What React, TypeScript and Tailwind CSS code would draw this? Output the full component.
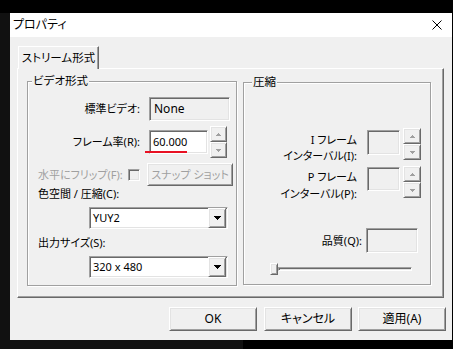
import React from "react";

const sunken =
  "border border-t-[#a0a0a0] border-l-[#a0a0a0] border-r-white border-b-white shadow-[inset_1px_1px_0_#696969,inset_-1px_-1px_0_#e3e3e3]";
const raised =
  "border border-t-white border-l-white border-r-[#696969] border-b-[#696969] shadow-[inset_1px_1px_0_#e3e3e3,inset_-1px_-1px_0_#a0a0a0]";

function UpArrow({ color }: { color: string }) {
  return (
    <svg width="5" height="3" viewBox="0 0 5 3" shapeRendering="crispEdges">
      <path d="M2 0h1v1h1v1h1v1H0V2h1V1h1z" fill={color} />
    </svg>
  );
}
function DownArrow({ color }: { color: string }) {
  return (
    <svg width="5" height="3" viewBox="0 0 5 3" shapeRendering="crispEdges">
      <path d="M0 0h5v1h-1v1h-1v1h-1v-1h-1v-1h-1z" fill={color} />
    </svg>
  );
}
function ComboArrow() {
  return (
    <svg width="7" height="4" viewBox="0 0 7 4" shapeRendering="crispEdges">
      <path d="M0 0h7v1h-1v1h-1v1h-1v1h-1v-1h-1v-1h-1v-1h-1z" fill="#000" />
    </svg>
  );
}

function Spinner({ w = 17 }: { w?: number }) {
  return (
    <div className={`flex flex-col ${w === 18 ? "w-[18px]" : "w-[17px]"}`}>
      <div className={`${raised} h-[16px] flex items-center justify-center bg-[#f0f0f0]`}>
        <UpArrow color="#a0a0a0" />
      </div>
      <div className={`${raised} h-[16px] flex items-center justify-center bg-[#f0f0f0]`}>
        <DownArrow color="#a0a0a0" />
      </div>
    </div>
  );
}

function Combo({ value }: { value: string }) {
  return (
    <div className={`${sunken} ml-[51px] w-[139px] h-[22px] bg-white flex items-center`}>
      <span className="pl-[3px] flex-1 leading-[16px] whitespace-nowrap">{value}</span>
      <div className={`${raised} w-[18px] h-[20px] mr-[1px] bg-[#f0f0f0] flex items-center justify-center`}>
        <ComboArrow />
      </div>
    </div>
  );
}

function Button({ label, className = "" }: { label: string; className?: string }) {
  return (
    <div className={`${raised} w-[88px] h-[24px] bg-[#f0f0f0] flex items-center justify-center leading-[16px] whitespace-nowrap ${className}`}>
      {label}
    </div>
  );
}

export default function App() {
  return (
    <div className="w-[453px] h-[349px] bg-black flex flex-col overflow-hidden font-['Noto_Sans','Noto_Sans_CJK_JP',sans-serif] text-[11px] text-black [font-feature-settings:'palt']">
      <div className="h-[13px] shrink-0" />
      <div className="flex h-[327px] shrink-0">
        <div className="w-[10px] bg-[#111]" />
        <div className="w-[442px] bg-[#f0f0f0] flex flex-col">
          {/* Title bar */}
          <div className="h-[24px] bg-white flex items-center pl-[3px]">
            <span className="leading-[16px] text-[12px]">プロパティ</span>
            <svg className="ml-auto mr-[10px]" width="10" height="10" viewBox="0 0 10 10">
              <path d="M0.5 0.5L9.5 9.5M9.5 0.5L0.5 9.5" stroke="#000" strokeWidth="1" />
            </svg>
          </div>
          {/* Body */}
          <div className="flex flex-col pl-[7px] pt-[9px]">
            <div className="flex h-[22px]">
              <div className="ml-[1px] w-[81px] h-[23px] relative z-10 bg-[#f0f0f0] border-t border-l border-r border-t-white border-l-white border-r-[#696969] shadow-[inset_-1px_0_0_#a0a0a0] flex items-center justify-center leading-[16px] whitespace-nowrap text-[11.5px]">
                ストリーム形式
              </div>
            </div>
            <div className="w-[427px] h-[230px] border border-t-white border-l-white border-r-[#696969] border-b-[#696969] shadow-[inset_-1px_-1px_0_#a0a0a0] flex pl-[9px] pt-[12px]">
              {/* Group 1 */}
              <div className="relative w-[210px] h-[205px] border border-[#a0a0a0] shadow-[inset_1px_1px_0_#fff,1px_1px_0_#fff] flex flex-col pl-[10px]">
                <span className="absolute left-[4px] top-[-9px] px-[1px] bg-[#f0f0f0] leading-[16px] whitespace-nowrap text-[11.5px]">ビデオ形式</span>
                {/* row 1 */}
                <div className="mt-[15px] flex items-center h-[24px]">
                  <span className="w-[102px] text-right leading-[16px] whitespace-nowrap">標準ビデオ:</span>
                  <div className={`${sunken} ml-[9px] w-[81px] h-[24px] bg-[#f0f0f0] flex items-center pl-[4px] leading-[16px] text-[12px]`}>None</div>
                </div>
                {/* row 2 */}
                <div className="mt-[5px] flex items-center h-[32px]">
                  <span className="w-[102px] text-right leading-[16px] whitespace-nowrap">フレーム率(R):</span>
                  <div className="relative ml-[9px]">
                    <div className={`${sunken} w-[59px] h-[24px] bg-white flex items-center pl-[3px] leading-[16px]`}>60.000</div>
                    <div className="absolute left-[-4px] top-[21px] w-[42px] h-[2px] bg-[#e81123]" />
                  </div>
                  <div className="ml-[2px]">
                    <Spinner />
                  </div>
                </div>
                {/* row 3 */}
                <div className="mt-[5px] flex items-center h-[23px]">
                  <span className="w-[90px] leading-[16px] text-[#a0a0a0] whitespace-nowrap">水平にフリップ(F):</span>
                  <div className={`${sunken} w-[12px] h-[12px] bg-[#f0f0f0]`} />
                  <div className={`${raised} ml-[7px] w-[86px] h-[23px] bg-[#f0f0f0] flex items-center justify-center leading-[16px] text-[#a0a0a0] whitespace-nowrap`}>
                    スナップ ショット
                  </div>
                </div>
                <div className="mt-[1px] h-[14px] flex items-center leading-[16px] whitespace-nowrap">色空間 / 圧縮(C):</div>
                <div className="mt-[6px]">
                  <Combo value="YUY2" />
                </div>
                <div className="mt-[7px] h-[14px] flex items-center leading-[16px] whitespace-nowrap">出力サイズ(S):</div>
                <div className="mt-[6px]">
                  <Combo value="320 x 480" />
                </div>
              </div>
              {/* Group 2 */}
              <div className="relative ml-[6px] mt-[1px] w-[188px] h-[203px] border border-[#a0a0a0] shadow-[inset_1px_1px_0_#fff,1px_1px_0_#fff] flex flex-col">
                <span className="absolute left-[8px] top-[-9px] px-[1px] bg-[#f0f0f0] leading-[16px] text-[11.5px]">圧縮</span>
                {/* I frame */}
                <div className="mt-[45px] flex items-start h-[32px]">
                  <div className="mt-[4px] w-[113px] text-right leading-[16px] whitespace-nowrap">
                    <div>I フレーム</div>
                    <div>インターバル(I):</div>
                  </div>
                  <div className={`${sunken} mt-[2px] ml-[10px] w-[33px] h-[25px] bg-[#f0f0f0]`} />
                  <div className="ml-[3px]">
                    <Spinner w={18} />
                  </div>
                </div>
                {/* P frame */}
                <div className="mt-[6px] flex items-start h-[32px]">
                  <div className="mt-[2px] w-[113px] text-right leading-[17px] whitespace-nowrap">
                    <div>P フレーム</div>
                    <div>インターバル(P):</div>
                  </div>
                  <div className={`${sunken} mt-[1px] ml-[10px] w-[33px] h-[24px] bg-[#f0f0f0]`} />
                  <div className="ml-[3px]">
                    <Spinner w={18} />
                  </div>
                </div>
                {/* Quality */}
                <div className="mt-[30px] flex items-center h-[25px]">
                  <span className="w-[118px] text-right leading-[16px] whitespace-nowrap">品質(Q):</span>
                  <div className={`${sunken} ml-[4px] w-[52px] h-[25px] bg-[#f0f0f0]`} />
                </div>
                {/* Slider */}
                <div className="mt-[10px] pl-[26px] flex items-start h-[12px]">
                  <div className={`${raised} w-[8px] h-[12px] bg-[#f0f0f0] relative z-10`} />
                  <div className="mt-[4px] w-[134px] h-[4px] border border-t-[#a0a0a0] border-l-[#a0a0a0] border-r-white border-b-white shadow-[inset_1px_1px_0_#696969] bg-[#e3e3e3]" />
                </div>
              </div>
            </div>
            {/* Buttons */}
            <div className="mt-[9px] flex justify-end pr-[6px] text-[12px]">
              <Button label="OK" />
              <Button label="キャンセル" className="ml-[7px]" />
              <Button label="適用(A)" className="ml-[6px]" />
            </div>
          </div>
        </div>
        <div className="flex-1 bg-black" />
      </div>
      <div className="flex h-[9px] shrink-0">
        <div className="w-[243px] bg-[#111]" />
        <div className="flex-1 bg-black" />
      </div>
    </div>
  );
}
